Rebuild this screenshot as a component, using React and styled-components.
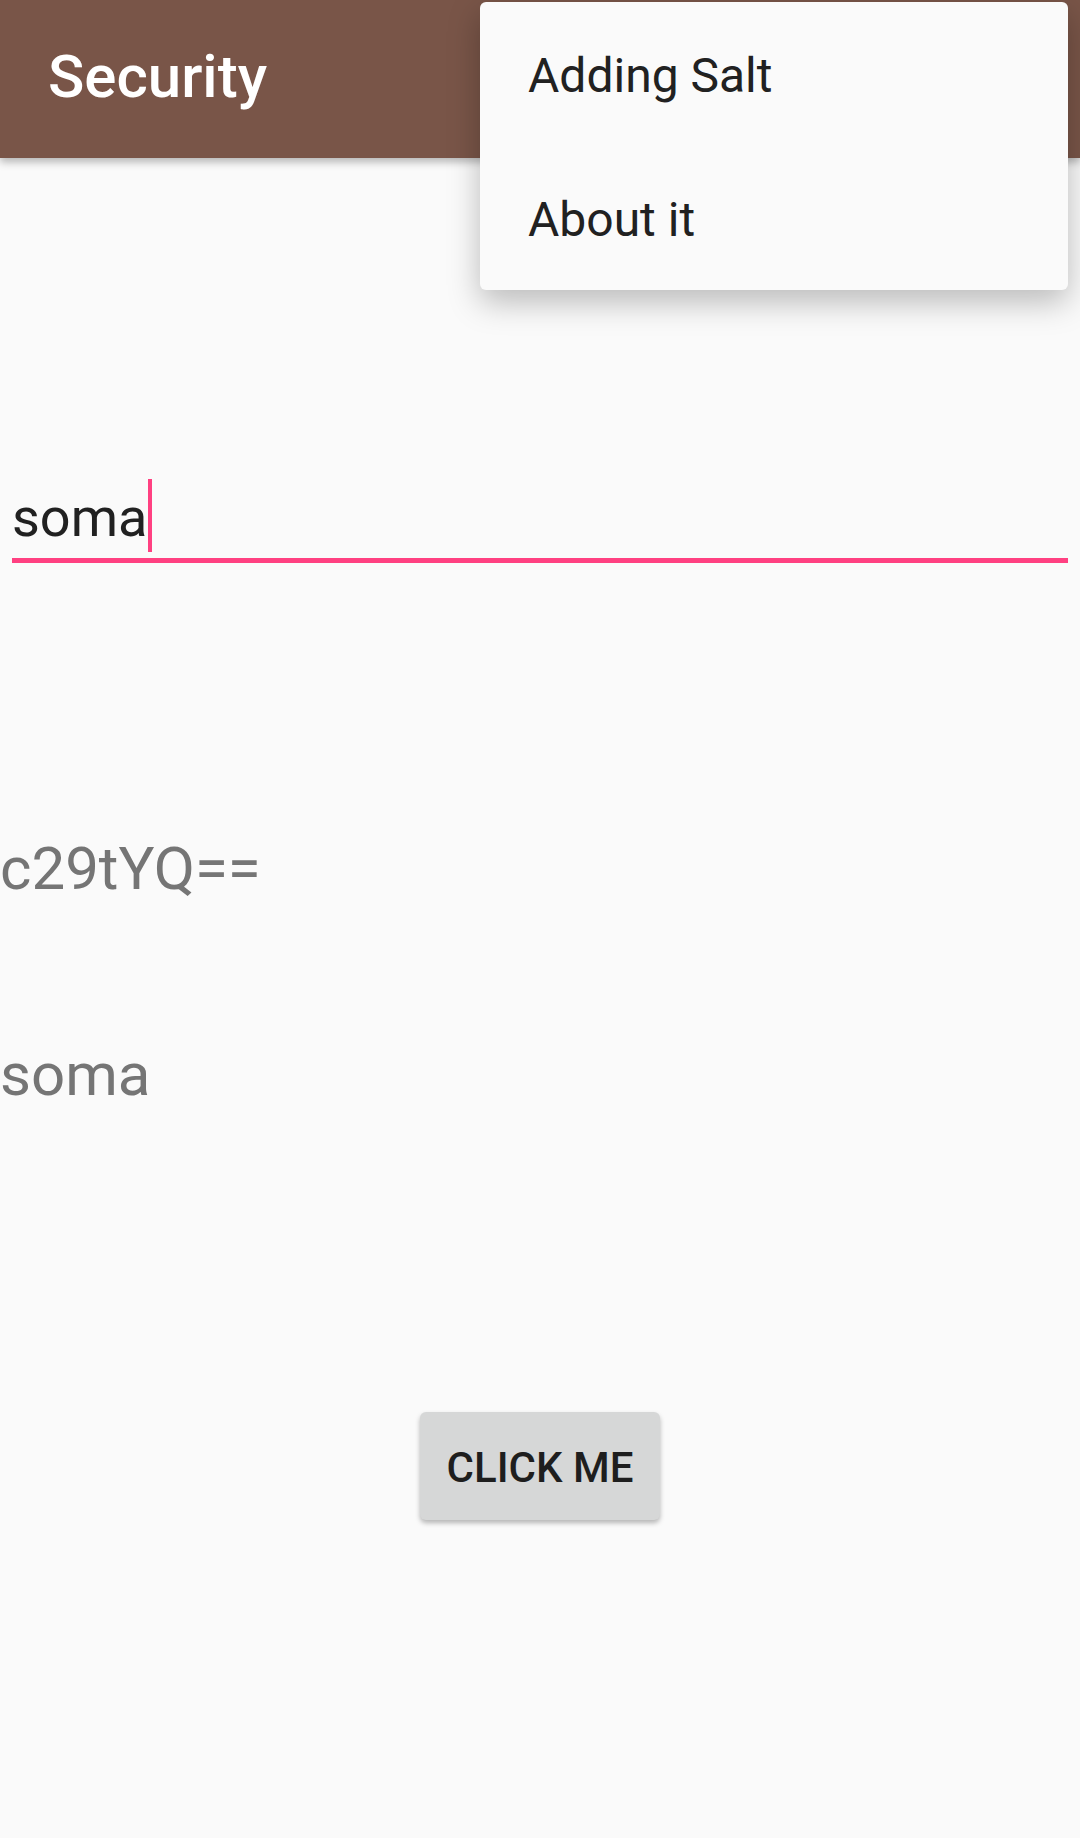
import styled, { createGlobalStyle } from "styled-components";

const GlobalStyle = createGlobalStyle`
    html, body {
        margin: 0;
        padding: 0;
        background-color: #fafafa;
        font-family: Roboto, "Noto Sans", sans-serif;
    }
`;

const App = () => {
    const menuItems = ["Adding Salt", "About it"];

    return (
        <Screen>
            <GlobalStyle />
            <AppBar>
                <Title>Security</Title>
            </AppBar>
            <Content>
                <Field>
                    <FieldText>soma</FieldText>
                    <Caret />
                </Field>
                <Output $first>c29tYQ==</Output>
                <Output>soma</Output>
                <ButtonRow>
                    <Button>CLICK ME</Button>
                </ButtonRow>
            </Content>
            <Menu>
                {menuItems.map((item) => (
                    <MenuItem key={item}>{item}</MenuItem>
                ))}
            </Menu>
        </Screen>
    );
};

const Screen = styled.div`
    position: relative;
    min-height: 1838px;
    background-color: #fafafa;
    overflow: hidden;
`;

const AppBar = styled.div`
    display: flex;
    align-items: center;
    height: 158px;
    padding: 0 48px 5px;
    box-sizing: border-box;
    background-color: #795548;
    box-shadow: 0 4px 8px rgba(0, 0, 0, 0.28);
    position: relative;
    z-index: 1;
`;

const Title = styled.div`
    color: #ffffff;
    font-size: 60px;
    line-height: 60px;
    font-weight: 500;
`;

const Content = styled.div`
    display: flex;
    flex-direction: column;
`;

const Field = styled.div`
    display: flex;
    align-items: flex-start;
    margin: 324px 12px 0;
    padding-bottom: 4px;
    border-bottom: 5px solid #ff4081;
`;

const FieldText = styled.span`
    font-size: 54px;
    line-height: 72px;
    color: #212121;
`;

const Caret = styled.span`
    display: block;
    width: 4px;
    height: 73px;
    margin-top: -3px;
    margin-left: 1px;
    background-color: #ff4081;
`;

const Output = styled.div`
    font-size: 60px;
    line-height: 72px;
    color: #757575;
    margin-top: ${(props) => (props.$first ? "270px" : "134px")};
`;

const ButtonRow = styled.div`
    display: flex;
    justify-content: center;
    margin-top: 301px;
`;

const Button = styled.div`
    display: flex;
    align-items: center;
    justify-content: center;
    width: 240px;
    height: 108px;
    padding-top: 3px;
    box-sizing: border-box;
    border-radius: 6px;
    background-color: #d6d7d7;
    color: #1e1e1e;
    font-size: 42px;
    font-weight: 500;
    box-shadow: 0 3px 5px rgba(0, 0, 0, 0.28);
`;

const Menu = styled.div`
    position: absolute;
    top: 2px;
    right: 12px;
    width: 588px;
    display: flex;
    flex-direction: column;
    background-color: #fafafa;
    border-radius: 6px;
    box-shadow: 0 12px 32px rgba(0, 0, 0, 0.26);
    z-index: 2;
`;

const MenuItem = styled.div`
    display: flex;
    align-items: center;
    height: 144px;
    padding: 3px 0 0 48px;
    box-sizing: border-box;
    font-size: 48px;
    line-height: 48px;
    color: #212121;
`;

export default App;
